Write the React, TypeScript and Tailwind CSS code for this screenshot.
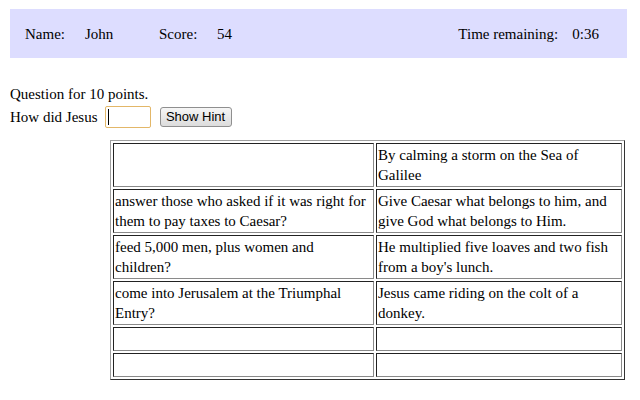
const rows: [string, string][] = [
  ['', 'By calming a storm on the Sea of Galilee'],
  [
    'answer those who asked if it was right for them to pay taxes to Caesar?',
    'Give Caesar what belongs to him, and give God what belongs to Him.',
  ],
  ['feed 5,000 men, plus women and children?', "He multiplied five loaves and two fish from a boy's lunch."],
  ['come into Jerusalem at the Triumphal Entry?', 'Jesus came riding on the colt of a donkey.'],
  ['', ''],
  ['', ''],
];

function Cell({ text, width }: { text: string; width: string }) {
  return (
    <td
      className={`${width} p-[1px] align-middle leading-[20px] border border-t-[#222222] border-l-[#222222] border-b-[#8a8a8a] border-r-[#8a8a8a]`}
    >
      {text || '\u00a0'}
    </td>
  );
}

export default function App() {
  return (
    <div className="min-h-[400px] w-[640px] bg-white text-black font-['Liberation_Serif','Times_New_Roman',serif] text-[15px]">
      <div className="ml-[10px] pt-[9px]">
        <div className="w-[617px] h-[49px] bg-[#ddddff] flex items-center pl-[15px] pr-[28px] leading-[20px]">
          <span className="w-[60px]">Name:</span>
          <span className="w-[74px]">John</span>
          <span className="w-[58px]">Score:</span>
          <span>54</span>
          <span className="ml-auto w-[114px]">Time remaining:</span>
          <span>0:36</span>
        </div>
      </div>

      <div className="ml-[10px] mt-[26px] leading-[20px]">Question for 10 points.</div>
      <div className="ml-[10px] mt-[1px] h-[24px] flex items-center leading-[20px]">
        <span>How did Jesus</span>
        <div className="ml-[7px] w-[46px] h-[22px] border border-[#e3b768] rounded-[2px] bg-white flex items-center pl-[2px]">
          <span className="w-px h-[16px] bg-black" />
        </div>
        <button className="ml-[9px] w-[72px] h-[20px] border border-[#8f8f8f] rounded-[3px] bg-gradient-to-b from-[#f6f6f6] to-[#dcdcdc] font-['Liberation_Sans',Arial,sans-serif] text-[13px] leading-[16px] text-black">
          Show Hint
        </button>
      </div>

      <table className="ml-[110px] mt-[11px] w-[515px] table-fixed border-separate border-spacing-[2px] border border-t-[#a0a0a0] border-l-[#a0a0a0] border-b-[#333333] border-r-[#333333]">
        <tbody>
          {rows.map(([q, a], i) => (
            <tr key={i}>
              <Cell text={q} width="w-[261px]" />
              <Cell text={a} width="w-[246px]" />
            </tr>
          ))}
        </tbody>
      </table>
    </div>
  );
}
